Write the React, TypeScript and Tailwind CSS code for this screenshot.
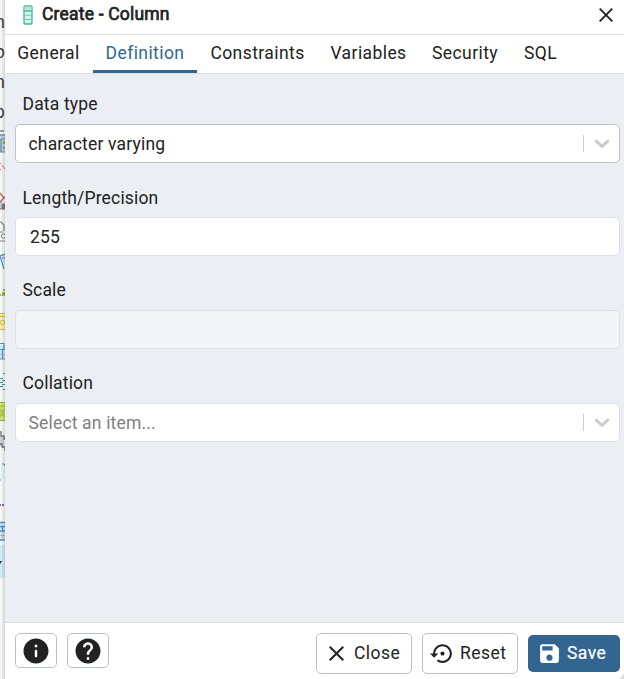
import { ReactNode } from "react";

const treeLetters = ["n", "b", "n", "p"];

const Glyph = ({ children }: { children: ReactNode }) => (
  <svg viewBox="0 0 5 30" className="block h-[30px] w-[5px] shrink-0" fill="none">
    {children}
  </svg>
);

/* Right-hand slivers of the object tree that remain visible beside the dialog. */
const ObjectTree = () => (
  <div className="relative w-[5px] shrink-0 overflow-hidden bg-[#fcfcfc] pt-[6px]">
    {treeLetters.map((l, i) => (
      <div key={i} className="flex h-[30px] w-[5px] items-center justify-end pt-px text-[18px] text-[#444]">
        {l}
      </div>
    ))}
    <Glyph>
      <path d="M0 5h4M0 9h5" stroke="#7d8890" strokeWidth="1.5" />
      <path d="M0 10h5v16H0z" fill="#c3d5e8" />
      <path d="M1 13h4M1 13v13M0 26h5" stroke="#71899c" strokeWidth="1.2" />
      <path d="M3 15h2v3H3zM3 21h2v2H3z" fill="#91b936" />
    </Glyph>
    <Glyph>
      <path d="M0 7l1 1M2 9l3 4M0 14l1-1" stroke="#ee8b91" strokeWidth="1.2" />
    </Glyph>
    <Glyph>
      <path d="M0 15l5 2v6H0z" fill="#b7c9d8" />
      <path d="M2 18h3v5H2z" fill="#997454" />
      <path d="M0 7l4 5-4 4M3 12l2-1" stroke="#d44343" strokeWidth="1.2" />
      <path d="M0 23h5" stroke="#777" />
    </Glyph>
    <Glyph>
      <path d="M0 6h1l3 3v6" stroke="#888" strokeWidth="1.2" />
      <circle cx="3.5" cy="20" r="2.2" stroke="#888" />
      <path d="M0 16h3M0 25h5" stroke="#888" />
    </Glyph>
    <Glyph>
      <path d="M1 9h4v12z" fill="#d4e8f6" />
      <path d="M5 8L0 10l4 13M2 12h3" stroke="#4492c5" strokeWidth="1.2" />
    </Glyph>
    <Glyph>
      <path d="M0 19h1.2M3 14h2M3 17h2v2H3z" stroke="#78a81b" strokeWidth="1.5" />
    </Glyph>
    <Glyph>
      <path d="M0 8h5v15H0z" fill="#fff6bb" />
      <path d="M0 7.5h5M0 10.5h5M0 23.5h5" stroke="#d1bd37" />
      <circle cx="2.5" cy="16.5" r="2.2" stroke="#d1bd37" />
    </Glyph>
    <Glyph>
      <path d="M0 9h5v13H0z" fill="#d8eafa" />
      <path d="M0 7.5h4v6M0 13.5h5M2.5 14v9M0 23h5" stroke="#4698dd" strokeWidth="1.1" />
      <path d="M0 18.5h5" stroke="#b3bdc4" />
    </Glyph>
    <Glyph>
      <path d="M3 7.5h2M0 12.5h3M2 14.5h3M0 16.5h3M2 18.5h3M0 20.5h3M3 23.5h2" stroke="#2f9aa8" />
    </Glyph>
    <Glyph>
      <path d="M0 6h5v19H0z" fill="#d5e97a" />
      <path d="M0 6.5h5M0 10h5M0 14h1v6H0M3 14h2M3 14v6h2M0 24.5h5" stroke="#96c21b" />
    </Glyph>
    <Glyph>
      <path d="M0 10h4v10H0z" fill="#c9d7e2" />
      <path d="M0 6h1v4h3v3h1M0 18h2v3h3v4" stroke="#777" strokeWidth="1.3" />
    </Glyph>
    <Glyph>
      <path d="M0 9h5v14H0z" fill="#edfbf9" />
      <path d="M2 8h2l1 2M0 24h1" stroke="#37a8a4" strokeWidth="1.2" />
    </Glyph>
    <Glyph>
      <path d="M0 19h1M2 19h2" stroke="#9167b9" strokeWidth="2" />
    </Glyph>
    <Glyph>
      <path d="M0 6h5v18H0z" fill="#dcecf8" />
      <path d="M0 6.5h5M0 10.5h5M2.5 10v5M0 15h5M0 24h5" stroke="#4698dd" strokeWidth="1.3" />
      <path d="M0 19.5h5M3 16v8" stroke="#b3bdc4" />
    </Glyph>
    <div className="-mt-px h-[33px] w-[5px] bg-[#d5effb]">
      <svg viewBox="0 0 5 33" className="h-[33px] w-[5px]">
        <path d="M0 16h2L0 19z" fill="#222" />
      </svg>
    </div>
    <div className="absolute inset-0 bg-linear-to-r from-black/0 to-black/15" />
  </div>
);

const ColumnIcon = () => (
  <svg viewBox="0 0 10 20" className="h-5 w-[10px]" fill="none">
    <rect x="1" y="1" width="8" height="18" rx="1.2" fill="#d5f4ea" stroke="#42b598" strokeWidth="1.3" />
    <path d="M1.6 1.6h6.8v4H1.6z" fill="#b4e6d8" />
    <path d="M1 6h8" stroke="#34ae8e" strokeWidth="1.2" />
    <path d="M1.5 10.2h7M1.5 14.5h7" stroke="#6cc9ae" />
  </svg>
);

const Cross = ({ className }: { className: string }) => (
  <svg viewBox="0 0 14 14" className={className} fill="none" stroke="#222" strokeWidth="1.9">
    <path d="M.7.7l12.6 12.6M13.3.7L.7 13.3" />
  </svg>
);

const InfoIcon = () => (
  <svg viewBox="0 0 24 24" className="h-[30px] w-[30px]" fill="#222">
    <path d="M12 2C6.48 2 2 6.48 2 12s4.48 10 10 10 10-4.48 10-10S17.52 2 12 2zm0 15c-.55 0-1-.45-1-1v-4c0-.55.45-1 1-1s1 .45 1 1v4c0 .55-.45 1-1 1zm1-8h-2V7h2v2z" />
  </svg>
);

const HelpIcon = () => (
  <svg viewBox="0 0 24 24" className="h-[30px] w-[30px]" fill="#222">
    <path d="M12 2C6.48 2 2 6.48 2 12s4.48 10 10 10 10-4.48 10-10S17.52 2 12 2zm1 17h-2v-2h2v2zm2.07-7.75l-.9.92C13.45 12.9 13 13.5 13 15h-2v-.5c0-1.1.45-2.1 1.17-2.83l1.24-1.26c.37-.36.59-.86.59-1.41 0-1.1-.9-2-2-2s-2 .9-2 2H8c0-2.21 1.79-4 4-4s4 1.79 4 4c0 .88-.36 1.68-.93 2.25z" />
  </svg>
);

const ResetIcon = () => (
  <svg viewBox="0 0 24 24" className="h-[25px] w-[25px]" fill="#222">
    <path d="M14 12c0-1.1-.9-2-2-2s-2 .9-2 2 .9 2 2 2 2-.9 2-2zm-2-9c-4.97 0-9 4.03-9 9H0l4 4 4-4H5c0-3.87 3.13-7 7-7s7 3.13 7 7-3.13 7-7 7c-1.51 0-2.91-.49-4.06-1.3l-1.42 1.44C8.04 20.3 9.94 21 12 21c4.97 0 9-4.03 9-9s-4.03-9-9-9z" />
  </svg>
);

const SaveIcon = () => (
  <svg viewBox="0 0 24 24" className="h-[25px] w-[25px]" fill="#fff">
    <path d="M17 3H5c-1.11 0-2 .9-2 2v14c0 1.1.89 2 2 2h14c1.1 0 2-.9 2-2V7l-4-4zm-5 16c-1.66 0-3-1.34-3-3s1.34-3 3-3 3 1.34 3 3-1.34 3-3 3zm3-10H5V5h10v4z" />
  </svg>
);

const Label = ({ children }: { children: ReactNode }) => (
  <div className="flex h-[30px] items-center pl-[7.5px]">{children}</div>
);

const Select = ({ border, children }: { border: string; children: ReactNode }) => (
  <div className={`flex h-[39px] items-center rounded-[5px] border bg-white pl-[12.5px] ${border}`}>
    <div className="flex-1">{children}</div>
    <div className="h-[17px] w-px bg-[#ccc]" />
    <div className="flex w-[35px] justify-center">
      <svg viewBox="0 0 16 10" className="h-[10px] w-4" fill="none" stroke="#ccc" strokeWidth="3" strokeLinecap="round" strokeLinejoin="round">
        <path d="M2.2 2.2L8 7.4l5.8-5.2" />
      </svg>
    </div>
  </div>
);

export default function App() {
  return (
    <div className="relative flex h-[679px] w-[624px] overflow-hidden bg-white font-['Roboto',sans-serif] text-[17.5px] leading-[26px] tracking-[0.17px] text-[#222]">
      <ObjectTree />
      <div className="flex min-w-0 flex-1 flex-col bg-white">
        <header className="flex h-[35px] shrink-0 items-center border-b border-[#dde0e9] pr-[11px] pb-[5px] pl-[18px]">
          <ColumnIcon />
          <h1 className="ml-[9px] flex-1 pb-px text-[17.5px] font-normal tracking-[0.19px] [-webkit-text-stroke:0.7px_#222]">Create - Column</h1>
          <Cross className="mt-[1px] h-[14px] w-[14px]" />
        </header>
        <nav className="flex h-[39px] shrink-0 border-b border-[#dde0e6] pb-[2px] tracking-[0.42px]">
          <div className="flex w-[88px] items-center justify-center pr-px">General</div>
          <div className="relative flex w-[104px] items-center justify-center text-[#326690]">
            Definition
            <span className="absolute right-0 -bottom-[2px] left-0 h-[3px] bg-[#326690]" />
          </div>
          <div className="flex w-[121px] items-center justify-center">Constraints</div>
          <div className="flex w-[101px] items-center justify-center">Variables</div>
          <div className="flex w-[92px] items-center justify-center">Security</div>
          <div className="flex w-[58px] items-center justify-center pl-px">SQL</div>
        </nav>
        <main className="flex min-h-0 flex-1 flex-col bg-[#ebeef3] pt-[15px] pr-1 pl-[10px]">
          <Label>Data type</Label>
          <div className="mt-[5px]">
            <Select border="border-[#bfc2c7]">character varying</Select>
          </div>
          <div className="mt-5"><Label>Length/Precision</Label></div>
          <div className="mt-1 flex h-[39px] items-center rounded-[5px] border border-[#dde0e6] bg-white pl-[14px]">255</div>
          <div className="mt-[19px]"><Label>Scale</Label></div>
          <div className="mt-[5px] h-[39px] rounded-[5px] border border-[#dde0e6] bg-[#f3f5f9]" />
          <div className="mt-[19px]"><Label>Collation</Label></div>
          <div className="mt-[5px]">
            <Select border="border-[#dde0e6]"><span className="text-[#808080]">Select an item...</span></Select>
          </div>
        </main>
        <footer className="flex h-[57px] shrink-0 items-start border-t border-[#dde0e6] pt-[10px] pr-1 pl-[10px] tracking-[0.45px]">
          <button className="flex h-[35px] w-[42px] items-center justify-center rounded-[5px] border border-[#bac1d2]"><InfoIcon /></button>
          <button className="ml-[10px] flex h-[35px] w-[42px] items-center justify-center rounded-[5px] border border-[#bac1d2]"><HelpIcon /></button>
          <div className="flex-1" />
          <button className="flex h-[41px] w-24 items-center rounded-[5px] border border-[#bac1d2] pl-3">
            <Cross className="mr-[10px] h-[15px] w-[15px]" /><span className="pb-[2px]">Close</span>
          </button>
          <button className="ml-[10px] flex h-[41px] w-24 items-center rounded-[5px] border border-[#bac1d2] pl-[7px]">
            <ResetIcon /><span className="ml-[5px] pb-[2px]">Reset</span>
          </button>
          <button className="mt-[2px] ml-[10px] flex h-[37px] w-[92px] items-center rounded-[5px] bg-[#326690] pl-[9px] text-white">
            <SaveIcon /><span className="ml-[5px] pb-[2px] [-webkit-text-stroke:0.2px_#fff]">Save</span>
          </button>
        </footer>
      </div>
      <svg viewBox="0 0 5 5" className="absolute right-0 bottom-0 h-[5px] w-[5px]">
        <path d="M5 0v5H0z" fill="#dcdcdc" />
      </svg>
    </div>
  );
}
